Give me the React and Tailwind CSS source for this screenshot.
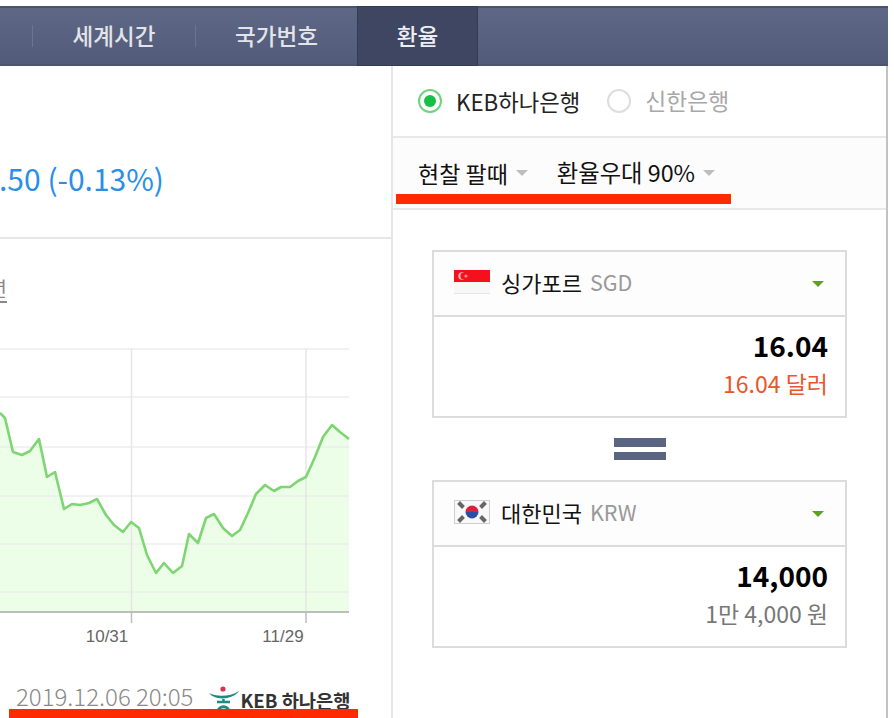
const FONT = "font-['Noto_Sans_CJK_KR','Noto_Sans',sans-serif]";

const POINTS = [
  [0, 413], [5, 418], [13, 452], [22, 455], [30, 451], [39, 439], [47, 477], [55, 472], [64, 509],
  [72, 504], [80, 505], [89, 503], [97, 499], [106, 515], [114, 525], [123, 532], [131, 522], [139, 528],
  [147, 555], [156, 573], [164, 563], [173, 573], [182, 566], [189, 534], [198, 543], [206, 518], [214, 514],
  [223, 528], [232, 536], [240, 530], [248, 513], [256, 494], [265, 485], [274, 491], [281, 487], [290, 487],
  [298, 481], [306, 477], [315, 457], [323, 437], [332, 425], [340, 432], [349, 439],
];

// chart svg starts at y=340 on the page
const line = POINTS.map(([x, y]) => `${x},${y - 340}`).join(" ");
const GRID_Y = [349, 397, 447, 496, 544, 592];

function Chart() {
  return (
    <svg width="360" height="310" viewBox="0 0 360 310" className="block">
      <polygon points={`0,272 ${line} 349,272`} fill="#ecfde8" />
      {GRID_Y.map((y) => (
        <line key={y} x1="0" x2="349" y1={y - 340} y2={y - 340} stroke="#ededed" strokeWidth="1.5" />
      ))}
      <line x1="131.5" x2="131.5" y1="9" y2="272" stroke="#e6e6e6" strokeWidth="1.5" />
      <line x1="306" x2="306" y1="9" y2="272" stroke="#e6e6e6" strokeWidth="1.5" />
      <polyline points={line} fill="none" stroke="#7dd672" strokeWidth="2.6" strokeLinejoin="round" />
      <line x1="0" x2="349" y1="272" y2="272" stroke="#bdbdbd" strokeWidth="2" />
      <line x1="131.5" x2="131.5" y1="272" y2="283" stroke="#bdbdbd" strokeWidth="1.5" />
      <line x1="306" x2="306" y1="272" y2="283" stroke="#bdbdbd" strokeWidth="1.5" />
      <text x="107" y="302" textAnchor="middle" fontSize="17" fill="#666" fontFamily="Liberation Sans">10/31</text>
      <text x="283" y="302" textAnchor="middle" fontSize="17" fill="#666" fontFamily="Liberation Sans">11/29</text>
    </svg>
  );
}

function HanaLogo() {
  return (
    <svg width="32" height="26" viewBox="0 0 32 26" className="block shrink-0">
      <circle cx="15" cy="3" r="2.6" fill="#d9304f" />
      <path d="M1 7 C8 11 22 11 31 5 C25 14 7 15 1 7 Z" fill="#1f8a80" />
      <path d="M9 16 H22 M15.5 13 V16" stroke="#1f8a80" strokeWidth="2.4" fill="none" />
      <path d="M10 26 C10 19 21 19 21 26" stroke="#1f8a80" strokeWidth="3" fill="none" />
    </svg>
  );
}

function Caret({ className }) {
  return <span className={`block h-0 w-0 border-x-[6px] border-t-[6px] border-x-transparent ${className}`} />;
}

function SgFlag() {
  return (
    <svg width="36" height="24" viewBox="0 0 36 24" className="block shrink-0">
      <rect width="36" height="12" fill="#f5101e" />
      <rect y="12" width="36" height="12" fill="#f7f7f7" />
      <rect y="23" width="36" height="1" fill="#e4e4e4" />
      <circle cx="8" cy="6" r="3.8" fill="#fbb4b8" />
      <circle cx="10" cy="6" r="3.6" fill="#f5101e" />
      <circle cx="12" cy="6" r="1.6" fill="#f98a92" />
    </svg>
  );
}

function KrFlag() {
  const bars = [[7, 5, 45], [29, 5, -45], [7, 19, -45], [29, 19, 45]];
  return (
    <svg width="36" height="24" viewBox="0 0 36 24" className="block shrink-0">
      <rect x="0.5" y="0.5" width="35" height="23" fill="#f8f8f8" stroke="#cfcfcf" />
      <path d="M11.5 12 a6.5 6.5 0 0 1 13 0 Z" fill="#d9233c" />
      <path d="M11.5 12 a6.5 6.5 0 0 0 13 0 Z" fill="#2a4ea8" />
      {bars.map(([x, y, r]) => (
        <rect key={`${x}-${y}`} x={x - 3.5} y={y - 2} width="7" height="4" fill="#666" transform={`rotate(${r} ${x} ${y})`} />
      ))}
    </svg>
  );
}

function CurrencyBox({ flag, name, code, value, words, wordsColor }) {
  return (
    <div className="mx-[39px] h-[168px] border-2 border-[#dcdcdc] bg-white">
      <div className="flex h-[63px] items-center bg-[#fdfdfd] pb-[3px] pl-[20px] pr-[21px]">
        {flag}
        <span className="ml-[11px] text-[22px] leading-none text-[#111]">{name}</span>
        <span className="ml-[8px] text-[21.5px] leading-none text-[#999]">{code}</span>
        <Caret className="ml-auto mt-[4px] border-t-[#5fa01e]" />
      </div>
      <div className="border-t-2 border-[#dcdcdc] pr-[17px] pt-[10px] text-right">
        <div className="text-[28px] font-bold leading-[36px] text-black">{value}</div>
        <div className={`mt-[5px] text-[23px] leading-[30px] ${wordsColor}`}>{words}</div>
      </div>
    </div>
  );
}

function NavDivider() {
  return <div className="h-[22px] w-px shrink-0 self-center bg-[#6b7490]" />;
}

export default function App() {
  return (
    <div className={`relative h-[718px] w-[894px] overflow-hidden bg-white ${FONT}`}>
      <div className="w-[888px] pt-[6px]">
        {/* Top nav */}
        <div className="flex h-[60px] border-y-2 border-t-[#4b526a] border-b-[#4d5570] bg-gradient-to-b from-[#5e6784] to-[#525b7a]">
          <div className="w-[32px] shrink-0" />
          <NavDivider />
          <div className="flex w-[162px] items-center justify-center text-[22.5px] font-medium text-[#e3e5ea]">세계시간</div>
          <NavDivider />
          <div className="flex w-[161px] items-center justify-center text-[22.5px] font-medium text-[#e3e5ea]">국가번호</div>
          <div className="-my-[2px] flex w-[121px] items-center justify-center border border-[#343b55] bg-[#3f4662] text-[22.5px] font-medium text-[#eceef2]">환율</div>
        </div>

        <div className="flex">
          {/* Left: chart */}
          <div className="w-[391px] shrink-0">
            <div className="h-[171px] pt-[91px]">
              <div className="flex w-[164px] justify-end overflow-hidden">
                <span className="whitespace-nowrap text-[30px] leading-[42px] text-[#2b8fe6]">12.50 (-0.13%)</span>
              </div>
            </div>
            <div className="h-[2px] bg-[#e6e6e6]" />
            <div className="flex h-[101px] w-[7px] justify-end overflow-hidden pt-[36px]">
              <span className="whitespace-nowrap text-[20px] leading-[28px] text-[#888] underline underline-offset-4">1년</span>
            </div>
            <Chart />
            <div className="mt-[32px] flex items-start pl-[16px]">
              <span className="whitespace-nowrap text-[24px] font-light leading-[28px] text-[#8a8a8a]">2019.12.06 20:05</span>
              <span className="ml-[15px] pt-[4px]"><HanaLogo /></span>
              <span className="whitespace-nowrap pt-[4px] text-[18.7px] font-bold leading-[28px] text-[#333]">KEB 하나은행</span>
            </div>
          </div>

          {/* Right: converter */}
          <div className="h-[652px] flex-1 border-x-2 border-l-[#e6e6e6] border-r-[#c2c2c2]">
            <div className="flex h-[72px] items-center border-b-2 border-[#e8e8e8] pl-[25px]">
              <span className="flex h-[24px] w-[24px] items-center justify-center rounded-full border-2 border-[#6fd47f] bg-white">
                <span className="h-[12px] w-[12px] rounded-full bg-[#16c045]" />
              </span>
              <span className="ml-[14px] text-[22.3px] leading-none text-[#222]">KEB하나은행</span>
              <span className="ml-[27px] h-[24px] w-[24px] rounded-full border-2 border-[#dedede] bg-white" />
              <span className="ml-[14px] text-[22.8px] leading-none text-[#a8a8a8]">신한은행</span>
            </div>
            <div className="flex h-[72px] items-center border-b-2 border-[#e8e8e8] bg-[#fcfcfc] pl-[25px]">
              <span className="text-[23px] leading-none text-[#111]">현찰 팔때</span>
              <Caret className="ml-[8px] border-t-[#bdbdbd]" />
              <span className="ml-[29px] text-[23.3px] leading-none text-[#111]">환율우대 90%</span>
              <Caret className="ml-[8px] border-t-[#bdbdbd]" />
            </div>
            <div className="pt-[40px]">
              <CurrencyBox
                flag={<SgFlag />}
                name="싱가포르"
                code="SGD"
                value="16.04"
                words="16.04 달러"
                wordsColor="text-[#e8562a]"
              />
              <div className="mx-auto my-[20px] flex w-[52px] flex-col gap-[5px]">
                <div className="h-[9px] bg-[#5a6483]" />
                <div className="h-[8px] bg-[#5a6483]" />
              </div>
              <CurrencyBox
                flag={<KrFlag />}
                name="대한민국"
                code="KRW"
                value="14,000"
                words="1만 4,000 원"
                wordsColor="text-[#777]"
              />
            </div>
          </div>
        </div>
      </div>

      {/* red highlight bars drawn over the screenshot */}
      <div className="absolute left-[396px] top-[194px] h-[10px] w-[335px] bg-[#ff2a00]" />
      <div className="absolute left-[9px] top-[709px] h-[9px] w-[349px] bg-[#ff2a00]" />
    </div>
  );
}
